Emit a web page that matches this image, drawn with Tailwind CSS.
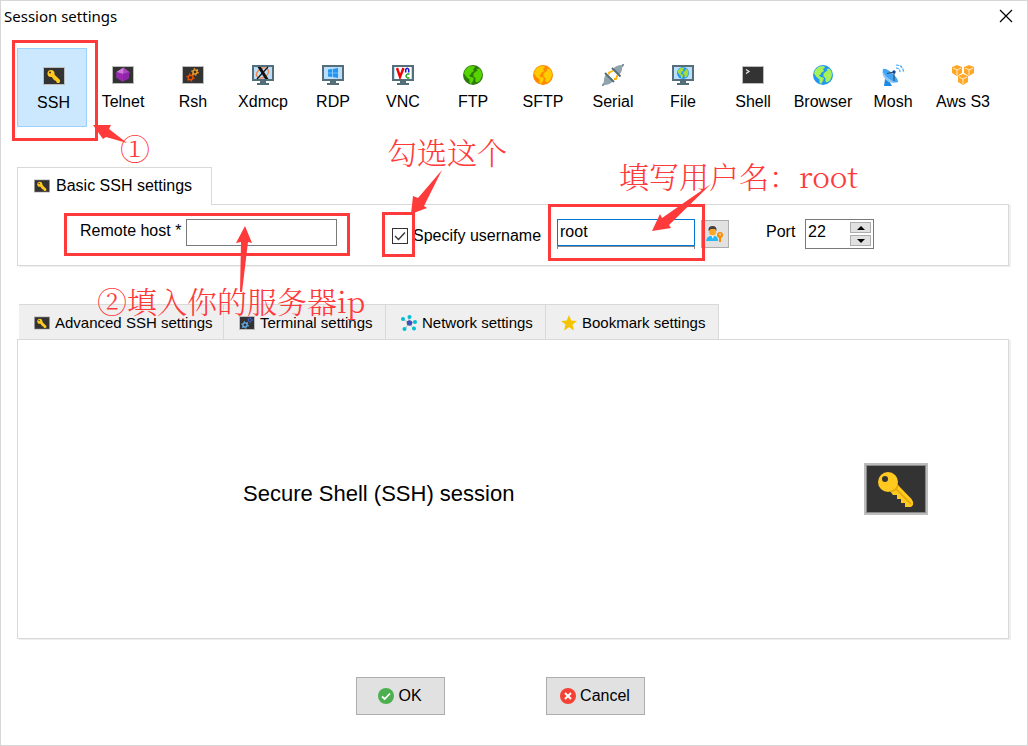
<!DOCTYPE html>
<html lang="en">
<head>
<meta charset="utf-8">
<title>Session settings</title>
<script src="https://cdn.jsdelivr.net/npm/@tailwindcss/browser@4"></script>
</head>
<body class="bg-white text-black font-['Liberation_Sans',Arial,sans-serif] text-base leading-6">
<svg class="hidden" aria-hidden="true">
  <symbol id="key" viewBox="0 0 64 52">
    <path fill="#bdbdbd" d="M0 0h64v52H0z"/><path fill="#888" d="M2 2h60v48H2z"/><path fill="#333" d="M3 3h58v46H3z"/>
    <path fill="#ffc91f" d="M32 20L47.500 36Q50 39 49 42L47 44H41V40H37V36H33V32H29L26 28z"/>
    <circle cx="24" cy="19" r="10" fill="#ffc91f"/><circle cx="21" cy="16" r="3" fill="#333"/>
    <path stroke="#e5a50a" stroke-width="1.500" fill="none" d="M32 26L47 41M27 28.500Q33 27 34 22"/>
  </symbol>
  <symbol id="keysmall" viewBox="0 0 22 18">
    <path fill="#bdbdbd" d="M0 0h22v18H0z"/><path fill="#333" d="M1 1h20v16H1z"/>
    <path fill="#ffc91f" d="M10 6l7 7v2l-1 1h-2l-1-2-2-1-3-4z"/><circle cx="8" cy="6.500" r="3.500" fill="#ffc91f"/><circle cx="7" cy="5.500" r="1" fill="#333"/>
  </symbol>
  <symbol id="gear" viewBox="0 0 10 10">
    <circle cx="5" cy="5" r="2.600" fill="none" stroke="currentColor" stroke-width="1.600"/>
    <circle cx="5" cy="5" r="3.900" fill="none" stroke="currentColor" stroke-width="1.600" stroke-dasharray="1.700 2.380"/>
  </symbol>
  <symbol id="monitor" viewBox="0 0 22 20">
    <path fill="#546e7a" d="M0 0h22v16H0zM8 16h6v2h3v2H5v-2h3z"/><path fill="#bbdefb" d="M2 2h18v12H2z"/>
  </symbol>
  <symbol id="land" viewBox="0 0 20 20">
    <path fill="currentColor" d="M2 5L6 1.500l5-.5 1 1.500-2 1.500 1 2-3 2v1.500l-2 .500 1 1.500 4 1.500-1 3-2 3-1.500-1v-3.500L3.500 12 1 8.500zM13.500 4l3-.500 2 3 .500 4-2 5-3 2-1.500-1v-3.500l-2-1.500 0-3 2.500-2 1.500-1z"/>
  </symbol>
</svg>
<main class="relative min-h-screen border border-[#d6d6d6]">
  <header class="flex h-[47px] items-start justify-between pl-[3px] pr-[14px]">
    <h1 class="pt-[3px] font-['Noto_Sans','Open_Sans',sans-serif] text-[15px]">Session settings</h1>
    <button type="button" aria-label="Close" class="mt-2 h-3.5 w-3.5"><svg viewBox="0 0 14 14" class="h-3.5 w-3.5"><path d="M1 1l12 12M13 1L1 13" stroke="#000" stroke-width="1.200"/></svg></button>
  </header>

  <nav class="flex h-[79px] pl-4" aria-label="Session type">
    <button type="button" class="mr-px flex w-[70px] flex-col items-center border border-[#99d1ff] bg-[#cce8ff] pt-[17px] pl-[3px]"><svg class="h-5 w-[22px]"><use href="#keysmall" width="22" height="18" y="1"/></svg><span class="mt-[5px]">SSH</span></button>
    <button type="button" class="flex w-[70px] flex-col items-center pt-[17px]"><svg viewBox="0 0 22 20" class="h-5 w-[22px]"><path fill="#bdbdbd" d="M0 1h22v18H0z"/><path fill="#333" d="M1 2h20v16H1z"/><path fill="#ab47bc" d="M11.500 2.500L17.500 7l-1 6.500-6 3-6-4L4.500 7z"/><path fill="#8e24aa" d="M11 9l6.500-2-1 6.500-6 3z"/><path fill="#ce7bdb" d="M11.500 2.500L11 9 4.500 7z"/><path fill="#9c27b0" d="M4.500 7L11 9l-.500 7.500-6-4z"/></svg><span class="mt-[5px]">Telnet</span></button>
    <button type="button" class="flex w-[70px] flex-col items-center pt-[17px]"><svg viewBox="0 0 22 20" class="h-5 w-[22px]"><path fill="#bdbdbd" d="M0 1h22v18H0z"/><path fill="#333" d="M1 2h20v16H1z"/><use href="#gear" x="4" y="8" width="9" height="9" color="#e65100"/><use href="#gear" x="9" y="3" width="8" height="8" color="#ffa726"/></svg><span class="mt-[5px]">Rsh</span></button>
    <button type="button" class="flex w-[70px] flex-col items-center pt-[17px]"><svg viewBox="0 0 22 20" class="h-5 w-[22px]"><use href="#monitor" width="22" height="20"/><ellipse cx="10.500" cy="8" rx="6.500" ry="4.500" fill="none" stroke="#f58442" stroke-width="1.300" transform="rotate(-30 10.500 8)"/><path d="M5.500 2h3.500l7.500 12h-3.500z" fill="#111"/><path d="M16 2L5 14" stroke="#111" stroke-width="1.200"/></svg><span class="mt-[5px]">Xdmcp</span></button>
    <button type="button" class="flex w-[70px] flex-col items-center pt-[17px]"><svg viewBox="0 0 22 20" class="h-5 w-[22px]"><use href="#monitor" width="22" height="20"/><path fill="#2196f3" d="M6 4.500l4-.5v3.700H6zM10.700 4L16 3v4.700h-5.300zM6 8.300h4V12l-4-.5zM10.700 8.300H16V13l-5.300-1z"/></svg><span class="mt-[5px]">RDP</span></button>
    <button type="button" class="flex w-[70px] flex-col items-center pt-[17px]"><svg viewBox="0 0 22 20" class="h-5 w-[22px]"><use href="#monitor" width="22" height="20"/><path fill="#fff" d="M3 2h16v12H3z"/><path d="M5 3l3 9 3.500-9" fill="none" stroke="#f00000" stroke-width="2.400"/><path d="M13.700 7.500V4.500q1.500-2.500 3 0v3" fill="none" stroke="#1515e0" stroke-width="1.500"/><path d="M17.500 9h-2q-3 2 0 4h2" fill="none" stroke="#19a819" stroke-width="1.500"/></svg><span class="mt-[5px]">VNC</span></button>
    <button type="button" class="flex w-[70px] flex-col items-center pt-[17px]"><svg viewBox="0 0 20 20" class="h-5 w-5"><circle cx="10" cy="10" r="10" fill="#2f7a0e"/><use href="#land" width="20" height="20" color="#55d400"/></svg><span class="mt-[5px]">FTP</span></button>
    <button type="button" class="flex w-[70px] flex-col items-center pt-[17px]"><svg viewBox="0 0 20 20" class="h-5 w-5"><circle cx="10" cy="10" r="10" fill="#ff8800"/><use href="#land" width="20" height="20" color="#ffcc00"/></svg><span class="mt-[5px]">SFTP</span></button>
    <button type="button" class="flex w-[70px] flex-col items-center pt-[17px]"><svg viewBox="0 0 22 22" class="-mt-px h-[22px] w-[22px]"><path d="M22 0l-3 3M0 22l3-3" stroke="#78909c" stroke-width="2"/><path d="M7 10.500V8.500l4-1.500M12 15h2l1.500-4" stroke="#ffb300" stroke-width="1.800" fill="none"/><path fill="#90a4ae" d="M11 5q3-4 9-4 1 6-3 10zM4 10l7 7q-3 4-9 4-1-6 2-11z"/><path d="M10 4l8.500 8.500M3 9l9 9" stroke="#546e7a" stroke-width="2"/></svg><span class="mt-1">Serial</span></button>
    <button type="button" class="flex w-[70px] flex-col items-center pt-[17px]"><svg viewBox="0 0 22 20" class="h-5 w-[22px]"><use href="#monitor" width="22" height="20"/><circle cx="11" cy="8" r="6" fill="#2196f3"/><use href="#land" x="5" y="2" width="12" height="12" color="#a4dc3c"/></svg><span class="mt-[5px]">File</span></button>
    <button type="button" class="flex w-[70px] flex-col items-center pt-[17px]"><svg viewBox="0 0 22 20" class="h-5 w-[22px]"><path fill="#bdbdbd" d="M0 1h22v18H0z"/><path fill="#333" d="M1 2h20v16H1z"/><path d="M4 4.500l3 2-3 2" fill="none" stroke="#eee" stroke-width="1.200"/></svg><span class="mt-[5px]">Shell</span></button>
    <button type="button" class="flex w-[70px] flex-col items-center pt-[17px]"><svg viewBox="0 0 20 20" class="h-5 w-5"><circle cx="10" cy="10" r="10" fill="#2196f3"/><use href="#land" width="20" height="20" color="#a5f15a"/></svg><span class="mt-[5px]">Browser</span></button>
    <button type="button" class="flex w-[70px] flex-col items-center pt-[17px]"><svg viewBox="0 0 22 22" class="-mt-px h-[22px] w-[22px]"><path fill="#1e88e5" d="M3 15h3l4 7H2z"/><path fill="#90caf9" d="M1 5q-2 6 3 11 5 5 12 2z"/><path fill="#42a5f5" d="M1 5q3-1 9 4t6 9q-4 1-10-4T1 5z"/><path d="M5 9.500l7-1.500v9" fill="none" stroke="#37474f" stroke-width="1"/><circle cx="12" cy="8" r="1.700" fill="#0d47a1"/><path d="M14 4q4 0 4 4M14 1q7 0 7.500 7" fill="none" stroke="#42a5f5" stroke-width="1.200" stroke-dasharray="3 1"/></svg><span class="mt-1">Mosh</span></button>
    <button type="button" class="flex w-[70px] flex-col items-center pt-[17px]"><svg viewBox="0 0 22 20" class="h-5 w-[22px]"><g fill="#ffa726"><path id="cube" stroke="none" d="M0 2l5-2 5 2v6l-5 3-5-3z"/><use href="#cube" x="12"/><use href="#cube" x="6" y="9"/></g><g fill="none" stroke="#fff3e0" stroke-width=".900"><path id="edge" d="M1 3l4 2 4-2M5 5v5"/><use href="#edge" x="12"/><use href="#edge" x="6" y="9"/></g></svg><span class="mt-[5px] whitespace-nowrap">Aws S3</span></button>
  </nav>

  <section class="mt-10 ml-4 mr-4">
    <div role="tablist" class="relative flex">
      <button type="button" role="tab" aria-selected="true" class="-mb-px flex h-[38px] w-[195px] items-center gap-1.5 border border-b-0 border-[#d9d9d9] bg-white pb-0.5 pl-4"><svg class="h-[14px] w-4"><use href="#keysmall" width="16" height="14"/></svg>Basic SSH settings</button>
    </div>
    <form class="mr-0.5 flex h-[62px] items-start border border-[#d9d9d9] pt-3.5 shadow-[2px_1px_0_#efefef]">
      <label for="host" class="ml-[62px] w-[106px]">Remote host *</label>
      <input id="host" type="text" class="h-[27px] w-[151px] border border-[#7a7a7a] px-1 outline-none">
      <span class="relative ml-[55px] mt-[9px] h-4 w-4">
        <input id="specify" type="checkbox" checked class="block h-4 w-4 appearance-none border border-[#333] bg-white">
        <svg viewBox="0 0 16 16" class="pointer-events-none absolute inset-0 h-4 w-4"><path d="M3 8l3.500 3.500L13 4.500" fill="none" stroke="#333" stroke-width="1.300"/></svg>
      </span>
      <label for="specify" class="ml-[5px] mt-[5px] w-[144px] whitespace-nowrap">Specify username</label>
      <div class="-mx-px h-[30px] border-x border-transparent"><input type="text" aria-label="Username" value="root" class="block h-[27px] w-[138px] border border-[#0078d7] px-0.5 pb-0.5 outline-none"><div class="h-[3px] border border-b-0 border-[#888]"></div></div>
      <button type="button" aria-label="Manage users" class="ml-1.5 mt-px grid h-7 w-7 place-items-center border border-[#adadad] bg-[#e1e1e1]"><svg viewBox="0 0 18 18" class="h-[18px] w-[18px]"><path fill="#29b6f6" d="M0 16q1-5 5-5h3q4 0 4 5z"/><path fill="#fff" d="M5 10h3l-1 4z"/><ellipse cx="6.500" cy="6" rx="3.500" ry="4.500" fill="#ffa726"/><path fill="#424242" d="M2.500 6Q2 1 6.500 1T10.500 6L9 4H5z"/><circle cx="14" cy="10" r="3" fill="#fb8c00"/><circle cx="14" cy="9.500" r="1" fill="#e1e1e1"/><path fill="#fb8c00" d="M13 12h2v5h-2z"/></svg></button>
      <label for="port" class="ml-[37px] mt-px w-[39px]">Port</label>
      <div class="flex h-[30px] w-[69px] items-start border border-[#7a7a7a] pr-0.5">
        <input id="port" type="text" value="22" class="h-6 w-full min-w-0 pl-0.5 outline-none">
        <div class="mt-0.5 flex flex-col gap-0.5">
          <button type="button" aria-label="Increase" class="grid h-[11px] w-[21px] place-items-center border border-[#adadad] bg-[#e1e1e1]"><svg viewBox="0 0 8 4" class="h-1 w-2"><path d="M4 0l4 4H0z"/></svg></button>
          <button type="button" aria-label="Decrease" class="grid h-[11px] w-[21px] place-items-center border border-[#adadad] bg-[#e1e1e1]"><svg viewBox="0 0 8 4" class="h-1 w-2"><path d="M4 4l4-4H0z"/></svg></button>
        </div>
      </div>
    </form>
  </section>

  <section class="mt-[38px] ml-4 mr-[18px]">
    <div role="tablist" class="ml-0.5 flex h-[35px] text-[15px] *:flex *:items-center *:border-t *:border-r *:border-[#d9d9d9] *:bg-[#efefef] *:pl-[15px] *:pt-0.5 *:whitespace-nowrap">
      <button type="button" role="tab" class="w-[205px] gap-[5px]"><svg class="h-[14px] w-4"><use href="#keysmall" width="16" height="14"/></svg>Advanced SSH settings</button>
      <button type="button" role="tab" class="w-[162px] gap-[5px]"><svg viewBox="0 0 16 14" class="h-[14px] w-4"><path fill="#bdbdbd" d="M0 0h16v14H0z"/><path fill="#333" d="M1 1h14v12H1z"/><use href="#gear" x="2" y="5" width="8" height="8" color="#64b5f6"/><use href="#gear" x="8" y="1" width="6" height="6" color="#3f60c8"/></svg>Terminal settings</button>
      <button type="button" role="tab" class="w-[160px] gap-[5px]"><svg viewBox="0 0 16 16" class="h-4 w-4"><path d="M8 8V2M8 8L2 4M8 8l6-1M8 8l-4 6M8 8l5 6" stroke="#b0bec5"/><g fill="#00bcd4"><circle cx="8.500" cy="2" r="2"/><circle cx="2" cy="4" r="2"/><circle cx="14" cy="7" r="2"/><circle cx="3.500" cy="14" r="2"/><circle cx="13" cy="13.500" r="2"/></g><circle cx="8.500" cy="8" r="2.800" fill="#3f51b5"/></svg>Network settings</button>
      <button type="button" role="tab" class="w-[173px] gap-[5px]"><svg viewBox="0 0 16 16" class="h-4 w-4"><path fill="#f5c400" d="M8 0l2.200 5.500 5.800.4-4.500 3.700L13 15.500 8 12.300 3 15.500l1.500-5.900L0 5.900l5.800-.4z"/></svg>Bookmark settings</button>
    </div>
    <div role="tabpanel" class="flex h-[300px] items-center justify-between border border-[#d9d9d9] pl-[225px] pr-20 shadow-[2px_1px_0_#efefef]">
      <p class="pt-2.5 text-[22px]">Secure Shell (SSH) session</p>
      <svg class="h-[52px] w-16"><use href="#key" width="64" height="52"/></svg>
    </div>
  </section>

  <footer class="mt-[38px] flex justify-center gap-[101px] pr-7">
    <button type="button" class="flex h-[38px] w-[89px] items-center justify-center gap-1 border border-[#adadad] bg-[#e1e1e1]"><svg viewBox="0 0 16 16" class="h-4 w-4"><circle cx="8" cy="8" r="8" fill="#4caf50"/><path d="M4 8.500l2.700 2.500L12 5.500" fill="none" stroke="#fff" stroke-width="1.800"/></svg>OK</button>
    <button type="button" class="flex h-[38px] w-[99px] items-center justify-center gap-1 border border-[#adadad] bg-[#e1e1e1]"><svg viewBox="0 0 16 16" class="h-4 w-4"><circle cx="8" cy="8" r="8" fill="#f44336"/><path d="M5 5l6 6M11 5l-6 6" stroke="#fff" stroke-width="2"/></svg>Cancel</button>
  </footer>

  <!-- Step-by-step notes laid over the dialog -->
  <div class="pointer-events-none absolute -inset-px overflow-hidden whitespace-nowrap font-['Noto_Serif_CJK_SC','Noto_Sans_CJK_SC',serif] text-[30px] font-light leading-9 text-[#ff3a3a]">
    <svg width="1028" height="746" class="absolute left-0 top-0">
      <g fill="none" stroke="#ff3a3a" stroke-width="3"><path d="M13.500 41.500h83v98h-83zM65.500 214.500h283v40h-283zM383.500 213.500h30v42h-30zM549.500 205.500h154v54h-154z"/></g>
      <g fill="#ff3a3a"><path d="M93 125h18l-2 4 18 14-21-6-3 2z"/><path d="M245 226l7 17-4-1-6 50h-2l1-50-5 1z"/><path d="M411 214l2-18 5 2 24-28-18 36 3 2z"/><path d="M652 231l8-17 2 4 49-34-42 41 2 3z"/></g>
    </svg>
    <p class="absolute left-[120px] top-[129px]">①</p>
    <p class="absolute left-[97px] top-[282px]">②填入你的服务器ip</p>
    <p class="absolute left-[387px] top-[133px]">勾选这个</p>
    <p class="absolute left-[619px] top-[157px]">填写用户名：root</p>
  </div>
</main>
</body>
</html>
